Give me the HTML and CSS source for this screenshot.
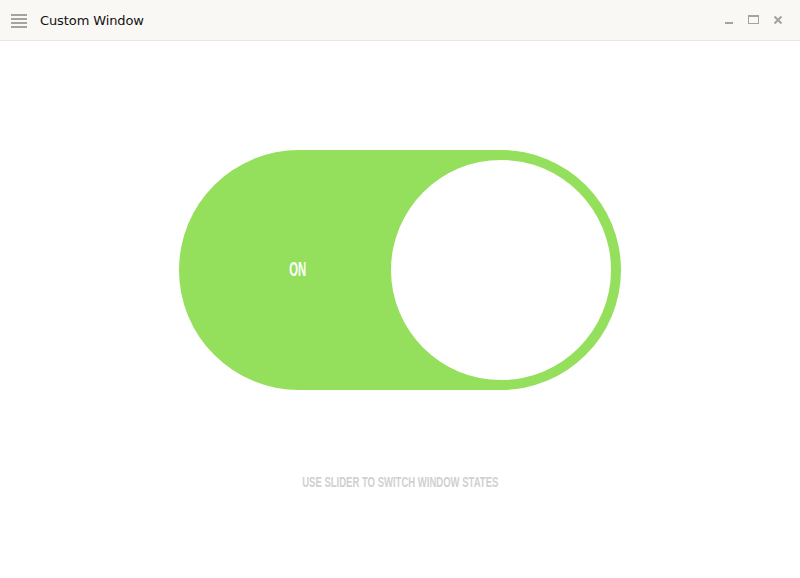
FILE: index.html
```html
<!DOCTYPE html>
<html>
<head>
<meta charset="utf-8">
<link rel="stylesheet" href="styles.css">
</head>
<body>
<div class="window">
  <header class="titlebar">
    <div class="title-left">
      <svg class="menu-icon" width="16" height="14" viewBox="0 0 16 14">
        <rect x="0" y="0" width="16" height="2" fill="#a3a3a0"/>
        <rect x="0" y="4" width="16" height="2" fill="#a3a3a0"/>
        <rect x="0" y="8" width="16" height="2" fill="#a3a3a0"/>
        <rect x="0" y="12" width="16" height="2" fill="#a3a3a0"/>
      </svg>
      <span class="title">Custom Window</span>
    </div>
    <div class="controls">
      <svg class="ctl" width="10" height="10" viewBox="0 0 10 10">
        <rect x="1" y="7" width="8" height="2" fill="#a3a3a0"/>
      </svg>
      <svg class="ctl" width="11" height="10" viewBox="0 0 11 10">
        <rect x="0.5" y="0.5" width="10" height="8" fill="none" stroke="#a3a3a0" stroke-width="1"/>
        <rect x="0" y="0" width="11" height="2" fill="#a3a3a0"/>
      </svg>
      <svg class="ctl" width="10" height="10" viewBox="0 0 10 10">
        <path d="M1.5 1.5 L8.5 8.5 M8.5 1.5 L1.5 8.5" stroke="#a3a3a0" stroke-width="2"/>
      </svg>
    </div>
  </header>
  <main class="content">
    <div class="toggle">
      <div class="label-area"><span class="toggle-label">ON</span></div>
      <div class="knob"></div>
    </div>
    <p class="hint"><span class="hint-text">USE SLIDER TO SWITCH WINDOW STATES</span></p>
  </main>
</div>
</body>
</html>
```
FILE: styles.css
```css
* { box-sizing: border-box; }
html, body { margin: 0; padding: 0; background: #ffffff; }
.window { width: 800px; height: 578px; display: flex; flex-direction: column; }
.titlebar {
  height: 41px;
  flex-shrink: 0;
  background: #f9f8f4;
  border-bottom: 1px solid #e6e6e4;
  display: flex;
  align-items: center;
  justify-content: space-between;
  padding: 0 17px 0 11px;
}
.title-left { display: flex; align-items: center; }
.menu-icon { display: block; margin-top: 1px; }
.title {
  margin-left: 13px;
  font-family: "DejaVu Sans", sans-serif;
  font-size: 13px;
  color: #121212;
  letter-spacing: -0.1px;
}
.controls { display: flex; align-items: center; gap: 14px; }
.ctl { display: block; }
.content { flex: 1; display: flex; flex-direction: column; align-items: center; }
.toggle {
  margin-top: 109px;
  width: 442px;
  height: 240px;
  flex-shrink: 0;
  border-radius: 120px;
  background: #94df5c;
  display: flex;
  align-items: center;
  padding: 10px;
}
.label-area {
  flex: 1;
  display: flex;
  justify-content: center;
  padding-left: 16px;
}
.toggle-label {
  display: inline-block;
  font-family: "Liberation Sans", sans-serif;
  font-weight: bold;
  font-size: 19.5px;
  line-height: 1;
  color: #ffffff;
  transform: scaleX(0.58);
}
.knob {
  width: 220px;
  height: 220px;
  flex-shrink: 0;
  border-radius: 50%;
  background: #ffffff;
}
.hint {
  margin: 84px 0 0 0;
  line-height: 1;
}
.hint-text {
  display: inline-block;
  font-family: "Liberation Sans", sans-serif;
  font-weight: bold;
  font-size: 14px;
  color: #d2d0d0;
  transform: scaleX(0.68);
}
```
